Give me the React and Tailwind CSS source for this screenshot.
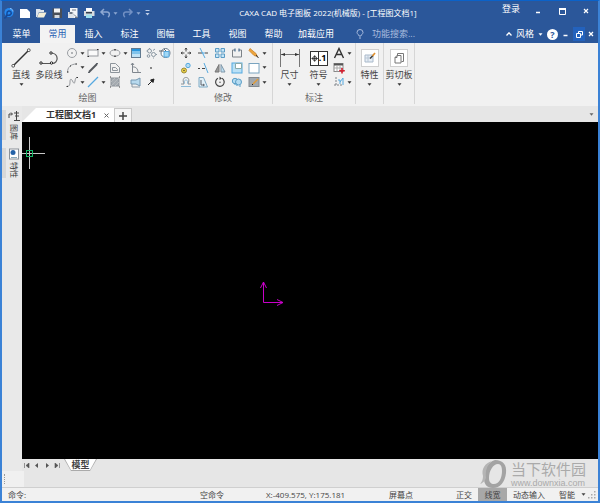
import React from "react";

const INK = "#5f656c";
const BLUE = "#55a9e0";

function Caret({ className = "" }) {
  return (
    <svg className={"shrink-0 " + className} width="5" height="3" viewBox="0 0 5 3" aria-hidden="true">
      <path d="M0.500 0.300h4L2.500 2.700z" fill="currentColor" />
    </svg>
  );
}

function Icon({ size = 12, box = 12, children }) {
  return (
    <svg className="shrink-0" width={size} height={size} viewBox={`0 0 ${box} ${box}`} fill="none" stroke={INK} strokeWidth="1" aria-hidden="true">
      {children}
    </svg>
  );
}

const quick = [
  ["新建", <path d="M1 2h7l3 3v6H1z" fill="#fff" stroke="none" />],
  ["打开", <g stroke="none"><path d="M1 2h4l1 1h3v2H4l-2 5H1z" fill="#dfe6ee" /><path d="M4 5.500h7.500L9 10.500H2z" fill="#f4efd9" /></g>],
  ["保存", <g stroke="none"><path d="M1.500 1.500h9.500v9.500h-9.500z" fill="#4a4f57" /><path d="M3 1.500h6v4H3z" fill="#f4f4f4" /><path d="M3.500 8h5v3h-5z" fill="#d5d9de" /></g>],
  ["另存为", <g stroke="none"><path d="M3 1h7.500v10H3z" fill="#f4f6f9" /><path d="M1 5h6v6H1z" fill="#dfe4ea" /><path d="M2.500 5h3v2h-3zM5 2.500h4v1H5z" fill="#6d7785" /><path d="M7 7.500l3 3M8 10.500h3" stroke="#6d7785" /></g>],
  ["打印", <g stroke="none"><path d="M3 1h6v3H3z" fill="#fff" /><path d="M1 4h10.500v5H1z" fill="#d7dbe0" /><path d="M3 5h6v1.500H3z" fill="#35404e" /><path d="M3 7.500h6V11H3z" fill="#9fe0ee" /></g>],
];

const tabs = ["菜单", "常用", "插入", "标注", "图幅", "工具", "视图", "帮助"];

const drawTools = [
  ["圆", true, <><circle cx="6" cy="6" r="4.500" stroke="#9a9ea3" /><circle cx="6" cy="6" r="0.800" fill={INK} stroke="none" /></>],
  ["矩形", true, <><rect x="1" y="3" width="10" height="6" stroke="#96999e" fill="#fafafa" /><path d="M0.500 9.500h1.500M10 2.500h1.500" stroke="#333" /></>],
  ["椭圆", true, <><ellipse cx="6" cy="6" rx="5" ry="3.200" stroke="#96999e" /><path d="M5 9.200h2M5 2.800h2" stroke="#333" /></>],
  ["渐变", false, <><rect x="1.500" y="1.500" width="9" height="9" fill="#bfe2f6" stroke="#617a90" /><path d="M2 2h8v2H2z" fill="#2795dd" stroke="none" /><path d="M2 4h8v3H2z" fill="#7fc3ec" stroke="none" /></>],
  ["齿轮", false, <g stroke="#8b98a3"><circle cx="4.500" cy="4" r="2" /><circle cx="8.500" cy="7.500" r="2" /><circle cx="3.500" cy="9" r="1.300" /><path d="M4.500 1v1M1.500 4h1M8 3.500l2-1.500M8.500 10.500v1M11 7.500h1" /></g>],
  ["块", false, <><circle cx="6.500" cy="6" r="4.500" fill="#fff" stroke="#697887" /><path d="M5 4.500h5V10H5z" fill="#a3d8f5" stroke={BLUE} /><path d="M0 4h5M5 2l2 2" /></>],
  ["圆弧", true, <><path d="M1.500 10.500C1.500 5 5 2 10.500 2" stroke="#96999e" /><path d="M1 10h1.500M9.500 2H11M4 4h1" stroke="#333" /></>],
  ["平行线", false, <><path d="M2 10L10 2" stroke="#54585d" strokeWidth="2" /><path d="M1 10.500h2M9 1.500h2" /></>],
  ["轮廓", false, <g stroke="#8d949b"><path d="M1.500 1.500h5l4 4v5h-9z" /><path d="M3.500 5.500h3l2 2v1h-5z" /></g>],
  ["局部放大", false, <g stroke="#7f868e"><path d="M2.500 1v9.500H11M2.500 5C6 4.500 8 7 8 10.500" /><path d="M1 3l1.500-2L4 3" /></g>],
  ["点", false, <circle cx="6" cy="6" r="0.900" fill="#555" stroke="none" />],
  null,
  ["样条", true, <><path d="M1 10c2 1 3-1 3-4s1-4 2.500-1 2 3 2.500 0S10 1.500 11 1.500" stroke="#96999e" /><path d="M0.500 10.500h1.500M10.500 1.500H12" stroke="#333" /></>],
  ["中心线", true, <path d="M1 11L11 1" stroke={BLUE} strokeWidth="1.300" />],
  ["填充", false, <><rect x="2" y="2" width="8" height="8" fill="#a5abb1" stroke="#8b9198" /><path d="M2 6l4-4M2 10l8-8M6 10l4-4" stroke="#b7bbbe" /><path d="M1 1h1M10 1h1M1 11h1M10 11h1" stroke="#444" /></>],
  ["图片", false, <><path d="M1 4h5l4-2v8l-4-2H1z" fill="#b7d9ee" stroke="#7698b1" /><path d="M2 8v3h8" stroke="#8d99a4" /></>],
  ["箭头", false, <path d="M3 9L7.500 4.500M5.500 4l3.500-1L8 6.500z" stroke="#222" fill="#222" />],
  null,
];

const modifyTools = [
  ["平移", <><path d="M6 1v3.500M6 7.500V11M1 6h3.500M7.500 6H11" stroke="#444" /><path d="M5 2.500L6 1l1 1.500M5 9.500L6 11l1-1.500M2.500 5L1 6l1.500 1M9.500 5L11 6 9.500 7" stroke="#444" /></>],
  ["裁剪", <><path d="M1 6h4M8 6h3" stroke="#444" /><path d="M3 1l5 10" stroke={BLUE} /><path d="M5 6h3" stroke={BLUE} /></>],
  ["阵列", <g stroke="#5b9bc4"><path d="M1.500 1.500h3.500v3.500H1.500zM7 1.500h3.500v3.500H7zM1.500 7h3.500v3.500H1.500zM7 7h3.500v3.500H7z" fill="#c6e6f8" /></g>],
  ["打断", <><path d="M4 3H1.500v7h9V3H8" stroke="#7c8288" /><path d="M4 1.500v3M8 1.500v3" stroke="#2a5780" /></>],
  ["编辑", <><path d="M2 1.500l6 5 1.500 3L6 8.500l-5-5z" fill="#eda43a" stroke="#c98430" strokeWidth="0.800" /><path d="M8 8l2.500 3" stroke="#333" /></>],
  ["复制", <><circle cx="4" cy="8.500" r="2.500" fill="#f0d548" stroke="#9a8a38" /><circle cx="8" cy="3.500" r="2.200" fill="#b5dcf2" stroke={BLUE} /><circle cx="4" cy="8.500" r="0.700" fill="#333" stroke="none" /></>],
  ["延伸", <><path d="M1 6.500h2M5 6.500h3" stroke="#444" /><path d="M7 1l4 10" stroke={BLUE} /></>],
  ["镜像", <><path d="M5 2.500v7.500H1z" fill="#999" stroke="#777" /><path d="M7 2.500v7.500h4z" fill="#bcdff3" stroke="#8197a8" /></>],
  ["缩放", <><rect x="1" y="1" width="10" height="10" fill="#b9e0f6" stroke={BLUE} /><path d="M4.500 1.500h6v5h-6z" fill="#fff" stroke="#8aa" /></>],
  ["矩形框", <rect x="1" y="1.500" width="10" height="9.500" fill="#fff" stroke="#7aa4c0" />],
  ["偏移", <><path d="M1 8h3C2 3 4 1.500 6 1.500S10 3 8 8h3" stroke="#8c9298" /><path d="M1 10.500h10M4.500 7.500C4 4.500 5 4 6 4s2 .5 1.500 3.500" stroke="#8ebbd8" /></>],
  ["拉伸", <><path d="M2 1.500h4.500l4 9.500H2z" stroke="#7da9c4" fill="#e3f1f9" /><path d="M4 4v5h3M6 8l1.500 1L6 10" /></>],
  ["旋转", <><path d="M8 2.300A4.300 4.300 0 1 1 4 2.200" stroke="#444" strokeWidth="1.200" /><path d="M5.500 0.500L8 2.500 5.500 4z" fill="#444" stroke="none" /><circle cx="6" cy="6.300" r="0.700" fill="#444" stroke="none" /></>],
  ["合并", <g fill="#b5dcf2" stroke="#5d9fc7"><circle cx="4" cy="5" r="2.700" /><circle cx="7.500" cy="6" r="3" /><path d="M3 8h3v2M9 9v2" /></g>],
  ["填充编辑", <><rect x="1" y="1.500" width="10" height="9" fill="#a2a8ae" stroke="#83898f" /><path d="M5 8l5-5" stroke="#e29a34" strokeWidth="1.500" /><path d="M4 9l1-1" stroke="#222" /></>],
];

const noteTools = [
  ["文字", true, <g stroke="#333" strokeWidth="1.400"><path d="M1.500 11L6 1.500 10.500 11M3.500 7.500h5" /></g>],
  ["表格", false, <><rect x="1" y="1.500" width="9" height="8" fill="#fff" stroke="#888" /><path d="M1 2.500h9" stroke="#555" strokeWidth="2" /><path d="M1 6h9M4 3v6.500M7 3v6.500" stroke="#aaa" /><path d="M9 6v5.500M6.300 8.800h5.500" stroke="#d51f2e" strokeWidth="1.600" /></>],
  ["坐标", true, <><path d="M3 1v9M1 9h9" stroke="#7c8288" strokeDasharray="2 1" /><path d="M5 4h2v4M7 6l3-4v7" stroke={BLUE} /></>],
];

function Tool({ name, caret, children }) {
  return (
    <div className="flex items-center text-[#333]">
      <button type="button" aria-label={name} className="flex h-3 w-3 items-center justify-center">
        <Icon>{children}</Icon>
      </button>
      {caret && <Caret className="ml-0.5" />}
    </div>
  );
}

function BigTool({ label, width, caret = true, children }) {
  return (
    <button type="button" className={"flex flex-col items-center whitespace-nowrap " + width}>
      <span className="flex h-[22px] items-center justify-center">{children}</span>
      <span className="h-3 leading-3">{label}</span>
      {caret && <Caret className="mt-0.5 text-[#333]" />}
    </button>
  );
}

function Group({ label, className, children }) {
  return (
    <section className={"flex flex-col border-r border-[#d6d6d6] pt-1 " + className}>
      <div className="flex flex-1">{children}</div>
      <div className="h-3 text-center leading-3 text-[#666]">{label}</div>
    </section>
  );
}

function TitleBar() {
  return (
    <header className="relative flex h-6 items-center justify-between text-white">
      <div className="flex h-full items-center">
        <svg width="13" height="13" viewBox="0 0 13 13" aria-hidden="true">
          <circle cx="7" cy="5.500" r="4.500" fill="#2588ef" />
          <path d="M2 11C5 11 5 8 5 6s3-3 4-1-1 4-4 3" fill="none" stroke="#134a9c" strokeWidth="1.500" />
          <path d="M8 1.500c2 0 3 2 3 3" stroke="#8dc6ff" fill="none" />
        </svg>
        <div className="ml-1 flex gap-1">
          {quick.map(([name, art]) => (
            <button key={name} type="button" aria-label={name} className="flex w-3 justify-center">
              <Icon>{art}</Icon>
            </button>
          ))}
        </div>
        <div className="ml-1 flex items-center text-[#8ea8d2]">
          <button type="button" aria-label="撤销">
            <Icon><path d="M2 5h6c3 0 3 4 1 5M5 2L2 5l3 3" stroke="#8ea8d2" strokeWidth="1.500" /></Icon>
          </button>
          <Caret className="ml-0.5" />
          <button type="button" aria-label="重做" className="ml-1">
            <Icon><path d="M10 5H4c-3 0-3 4-1 5M7 2l3 3-3 3" stroke="#7391c4" strokeWidth="1.500" /></Icon>
          </button>
          <Caret className="ml-0.5" />
          <svg className="ml-1 text-[#c3d0e8]" width="5" height="6" viewBox="0 0 5 6" aria-hidden="true">
            <path d="M0.500 0.500h4" stroke="currentColor" />
            <path d="M0.500 3h4L2.500 5.500z" fill="currentColor" />
          </svg>
        </div>
      </div>
      <h1 className="absolute left-1/2 top-1.5 -translate-x-1/2 ml-7 whitespace-nowrap text-[8px] leading-3">
        CAXA CAD 电子图板 2022(机械版) - [工程图文档1]
      </h1>
      <div className="flex h-full items-start pt-0.5">
        <button type="button" className="mr-1.5 leading-3">登录</button>
        <button type="button" aria-label="最小化" className="flex h-4 w-6 items-center justify-center">
          <svg width="6" height="6"><path d="M1 4.500h4" stroke="#fff" strokeWidth="1.500" /></svg>
        </button>
        <button type="button" aria-label="最大化" className="flex h-4 w-6 items-center justify-center">
          <svg width="7" height="7"><path d="M0.500 1h6v5.500h-6z" stroke="#fff" fill="none" /><path d="M0 1h7" stroke="#fff" strokeWidth="2" /></svg>
        </button>
        <button type="button" aria-label="关闭" className="flex h-4 w-6 items-center justify-center">
          <svg width="6" height="6"><path d="M1 1l4 4M5 1L1 5" stroke="#fff" strokeWidth="1.200" /></svg>
        </button>
      </div>
    </header>
  );
}

function MenuBar() {
  return (
    <nav className="flex h-[18px] items-center text-white">
      <div className="flex h-full pl-0.5">
        {tabs.map((t) => (
          <button
            key={t}
            type="button"
            className={"w-[35px] mr-px leading-4 " + (t === "常用" ? "bg-[#f3f3f3] text-[#2a5fb4]" : "")}
          >
            {t}
          </button>
        ))}
        <button type="button" className="w-12 leading-4">加载应用</button>
      </div>
      <label htmlFor="feature-search" className="ml-4 text-[#a9bcde]">
        <svg width="8" height="10" viewBox="0 0 8 10" fill="none" stroke="currentColor" aria-hidden="true">
          <path d="M3 7C3 5.500 1 5 1 3.500a3 3 0 0 1 6 0C7 5 5 5.500 5 7zM3 9h2" />
        </svg>
      </label>
      <input
        id="feature-search"
        type="text"
        aria-label="功能搜索"
        placeholder="功能搜索..."
        className="ml-2 w-12 min-w-0 bg-transparent leading-4 outline-none placeholder:text-[#a9bcde]"
      />
      <div className="ml-auto flex h-full items-center">
        <svg width="6" height="4" aria-hidden="true"><path d="M0.500 3.500L3 0.800l2.500 2.700" stroke="#fff" fill="none" strokeWidth="1.300" /></svg>
        <button type="button" className="ml-1 flex items-center gap-1 leading-4">
          风格
          <Caret />
        </button>
        <button type="button" aria-label="帮助主题" className="ml-1 flex h-[11px] w-[11px] items-center justify-center rounded-full bg-white font-bold leading-none text-[#2b579a]">
          ?
        </button>
        <button type="button" aria-label="最小化文档" className="flex h-4 w-[15px] items-center justify-center">
          <svg width="5" height="6"><path d="M0.500 4.500h4" stroke="#fff" strokeWidth="1.500" /></svg>
        </button>
        <button type="button" aria-label="还原文档" className="flex h-[14px] w-3 items-center justify-center bg-[#2362bd]">
          <svg width="7" height="7" fill="none" stroke="#fff"><path d="M2.500 2.500v-2h4v3.500h-2M0.500 2.500h4v4h-4z" /></svg>
        </button>
        <button type="button" aria-label="关闭文档" className="flex h-4 w-3 mr-px items-center justify-center">
          <svg width="6" height="6"><path d="M1 1l4 4M5 1L1 5" stroke="#fff" strokeWidth="1.300" /></svg>
        </button>
      </div>
    </nav>
  );
}

function Ribbon() {
  return (
    <div className="flex h-[63px] bg-[#f1f1f1] pb-0.5 text-[#444]">
      <Group label="绘图" className="w-[172px]">
        <BigTool label="直线" width="w-[38px]">
          <svg width="20" height="20" viewBox="0 0 20 20" fill="#fff" stroke="#333">
            <path d="M2 18L18 2" strokeWidth="1.400" />
            <circle cx="2.200" cy="17.800" r="1.400" strokeWidth="0.800" />
            <circle cx="17.800" cy="2.200" r="1.400" strokeWidth="0.800" />
          </svg>
        </BigTool>
        <BigTool label="多段线" width="w-[18px]" caret={false}>
          <svg width="20" height="14" viewBox="0 0 20 14" fill="none" stroke="#555">
            <path d="M2 12.500h11c7 0 7-10.500-1-10.500" strokeWidth="1.200" />
            <g fill="#fff" stroke="#222"><circle cx="2" cy="12" r="1.200" /><circle cx="12.500" cy="12" r="1.200" /><circle cx="12" cy="2" r="1.200" /></g>
          </svg>
        </BigTool>
        <div className="ml-2 grid h-[41px] grid-cols-[21px_22px_21px_15px_14px_14px] content-between">
          {drawTools.map((t, i) =>
            t ? <Tool key={t[0]} name={t[0]} caret={t[1]}>{t[2]}</Tool> : <span key={i} />
          )}
        </div>
      </Group>
      <Group label="修改" className="w-[99px]">
        <div className="ml-1.5 grid h-[41px] grid-cols-[17px_17px_17px_17px_20px] content-between">
          {modifyTools.map((t, i) => (
            <Tool key={t[0]} name={t[0]} caret={i % 5 === 4}>{t[1]}</Tool>
          ))}
        </div>
      </Group>
      <Group label="标注" className="w-[83px]">
        <BigTool label="尺寸" width="w-[33px]">
          <svg width="20" height="20" viewBox="0 0 20 20" stroke="#777" fill="none">
            <path d="M0.500 1v18M19.500 1v18M1 6.500h18" />
            <path d="M1 6.500l4-1.500v3zM19 6.500L15 5v3z" fill="#333" stroke="none" />
          </svg>
        </BigTool>
        <BigTool label="符号" width="w-[25px]">
          <span className="flex h-[15px] w-[18px] border border-[#333] bg-white font-bold leading-3 text-black">
            <svg width="9" height="13" viewBox="0 0 9 13" fill="none" stroke="#222">
              <circle cx="4.500" cy="6.500" r="2.500" /><path d="M4.500 2.500v8M0.500 6.500h8" />
            </svg>
            <span className="flex-1 border-l border-[#333]">.1</span>
          </span>
        </BigTool>
        <div className="ml-0.5 grid h-[41px] w-5 content-between">
          {noteTools.map((t) => (
            <Tool key={t[0]} name={t[0]} caret={t[1]}>{t[2]}</Tool>
          ))}
        </div>
      </Group>
      <Group label="" className="w-7">
        <BigTool label="特性" width="w-full">
          <span className="flex h-[18px] w-[18px] items-center justify-center border border-[#cfcfcf] bg-white">
            <Icon><path d="M1 3h8v7H1z" fill="#e6edf5" stroke="#a9b9ca" /><path d="M1 6h8M4 3v7" stroke="#b9c7d6" /><path d="M6 6.500l3-3" stroke="#333" strokeWidth="1.300" /><path d="M8.500 4l2.500-3" stroke="#e2902d" strokeWidth="1.700" /></Icon>
          </span>
        </BigTool>
      </Group>
      <Group label="" className="w-[31px]">
        <BigTool label="剪切板" width="w-full">
          <span className="flex h-[18px] w-[18px] items-center justify-center border border-[#cfcfcf] bg-white">
            <Icon><path d="M4.500 3.500v-2h6v8h-2" stroke="#777" /><path d="M4 3.500h4v7.500H2V5.500z" stroke="#777" fill="#fff" /><path d="M4 3.500v2H2" stroke="#777" /></Icon>
          </span>
        </BigTool>
      </Group>
    </div>
  );
}

function SideTab({ label, children }) {
  return (
    <button type="button" className="flex w-full border-l-4 border-[#d8d8d8] pl-0.5">
      <span className="flex flex-col items-center gap-0.5">
        {children}
        <span className="text-[8px] leading-[10px] text-[#333] [text-orientation:sideways] [writing-mode:vertical-rl]">{label}</span>
      </span>
    </button>
  );
}

function Workspace() {
  return (
    <main className="flex flex-1">
      <aside className="flex w-5 flex-col gap-2 bg-[#e9e9e9] pt-1">
        <SideTab label="图库">
          <Icon><path d="M1 8V4h3M3 2.500L4.500 4 3 5.500M6 3h5M7 6h4M8.500 1v9M6 10.500h6" stroke="#444" /></Icon>
        </SideTab>
        <SideTab label="特性">
          <Icon><rect x="1.500" y="1" width="9" height="10" fill="#fff" stroke="#8b929a" /><circle cx="5" cy="4.500" r="2.500" fill="#2563a8" stroke="none" /><path d="M3 9.500h6" stroke="#8ab" /></Icon>
        </SideTab>
      </aside>
      <div className="flex min-w-0 flex-1 flex-col bg-[#e6e6e6]">
        <div className="flex h-4 items-end">
          <div className="flex h-[14px] items-center bg-white pl-6 pr-1 [clip-path:polygon(14px_0,100%_0,100%_100%,0_100%)]">
            <button type="button" className="whitespace-nowrap font-bold leading-3 text-[#333]">工程图文档1</button>
            <button type="button" aria-label="关闭标签" className="ml-1.5 flex h-3 w-2 items-center justify-center">
              <svg width="5" height="5"><path d="M0.500 0.500l4 4M4.500 0.500l-4 4" stroke="#666" /></svg>
            </button>
          </div>
          <button type="button" aria-label="新建标签" className="flex h-[14px] w-[18px] items-center justify-center border border-b-0 border-[#c9c9c9] bg-[#f6f6f6]">
            <svg width="8" height="8"><path d="M4 0v8M0 4h8" stroke="#444" strokeWidth="1.500" /></svg>
          </button>
          <Caret className="mb-1.5 ml-auto mr-1 text-[#666]" />
        </div>
        <div className="relative min-h-40 flex-1 bg-black">
          <svg className="absolute left-0 top-[15px]" width="23" height="32" fill="none" aria-hidden="true">
            <path d="M7.500 0v32M0 16.500h23" stroke="#c8c8c8" />
            <rect x="4.500" y="13.500" width="6" height="6" stroke="#12b866" />
          </svg>
          <svg className="absolute left-[42%] top-[47%] -ml-1" width="25" height="26" fill="none" stroke="#c800c8" aria-hidden="true">
            <path d="M3.500 2v20.500H23M0.500 8l3-6 3 6M17 19.500l6 3-6 3" />
          </svg>
        </div>
        <div className="flex h-3 items-start">
          <div className="flex h-3 w-[42px] items-center justify-around pr-0.5 text-[#555]">
            {[["首页", "M0.500 0v5M5 0v5L2 2.500z"], ["上一页", "M4 0v5L1 2.500z"], ["下一页", "M2 0v5l3-2.500z"], ["末页", "M1 0v5l3-2.500zM5.500 0v5"]].map(([n, d]) => (
              <button key={n} type="button" aria-label={n}>
                <svg width="6" height="5"><path d={d} fill="currentColor" stroke={n.length === 2 ? "currentColor" : "none"} strokeWidth="0.600" /></svg>
              </button>
            ))}
          </div>
          <div className="bg-[#aaa] px-px pb-px [clip-path:polygon(0_0,100%_0,26px_100%,7px_100%)]">
            <button type="button" className="block h-[11px] w-[31px] bg-white font-bold leading-[10px] text-[#444] [clip-path:polygon(0_0,100%_0,25px_100%,6px_100%)]">
              模型
            </button>
          </div>
        </div>
      </div>
    </main>
  );
}

function StatusBar() {
  return (
    <footer>
      <div className="flex h-4 bg-[#e6e6e6]">
        <div className="flex w-[22px] items-center bg-[#f0f0f0] pl-0.5">
          <div className="h-[10px] border-l border-dotted border-[#999]" />
        </div>
      </div>
      <div className="flex h-[14px] items-center border-t border-[#cfcfcf] bg-[#f1f1f1] text-[8px] leading-[13px] text-[#444]">
        <label htmlFor="command" className="pl-1.5">命令:</label>
        <input id="command" type="text" className="h-3 w-0 min-w-0 flex-1 bg-transparent outline-none" />
        <span className="w-[66px]">空命令</span>
        <span className="w-[123px] whitespace-nowrap">X:-409.575, Y:175.181</span>
        <button type="button" className="mr-[43px]">屏幕点</button>
        <button type="button" className="mr-1.5">正交</button>
        <button type="button" className="w-[29px] bg-[#a8a8a8]">线宽</button>
        <button type="button" className="ml-1.5">动态输入</button>
        <button type="button" className="ml-3.5 flex items-center gap-1.5">智能<Caret /></button>
        <svg className="ml-0.5 mr-0.5" width="8" height="8" fill="#aaa" aria-hidden="true">
          <path d="M6 0h1.500v1.500H6zM3 3h1.500v1.500H3zM6 3h1.500v1.500H6zM0 6h1.500v1.500H0zM3 6h1.500v1.500H3zM6 6h1.500v1.500H6z" />
        </svg>
      </div>
    </footer>
  );
}

export default function App() {
  return (
    <div className="relative flex min-h-screen flex-col border-2 border-t-[1px] border-[#3b82d6] border-t-[#0b62c9] bg-[#2b579a] font-['Open_Sans','Noto_Sans_CJK_SC',sans-serif] text-[9px]">
      <TitleBar />
      <MenuBar />
      <Ribbon />
      <Workspace />
      <StatusBar />
      <div className="pointer-events-none absolute bottom-3 right-3 flex items-center gap-1 text-[#aaaaaa]">
        <svg width="27" height="29" viewBox="0 0 27 29" aria-hidden="true">
          <path fillRule="evenodd" d="M15 0C23 0 27 5 26 13c-1 9-6 15-13 15-6 0-9-4-9-9C4 9 8 2 15 0zm3 4c-5 0-9 7-9 14 0 4 2 6 5 6 5 0 8-6 8-13 0-4-1-7-4-7z" fill="#a3a3a3" />
          <path d="M12 1C5 3 1 9 3 16c0 3-1 6-3 8 3-1 5-3 6-6C5 11 7 5 12 1z" fill="#b5b5b5" />
        </svg>
        <div>
          <div className="text-[15px] leading-4">当下软件园</div>
          <div className="font-['Liberation_Sans',sans-serif] leading-3">www.downxia.com</div>
        </div>
      </div>
    </div>
  );
}
